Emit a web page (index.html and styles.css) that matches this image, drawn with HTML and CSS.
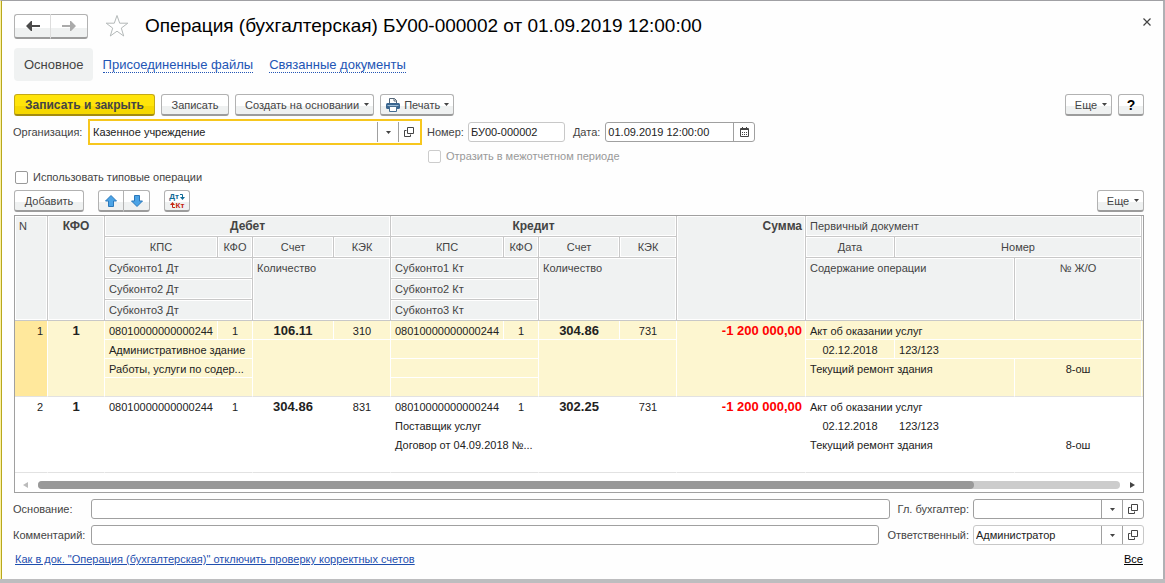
FILE: index.html
```html
<!DOCTYPE html>
<html lang="ru">
<head>
<meta charset="utf-8">
<title>Операция (бухгалтерская)</title>
<link rel="stylesheet" href="styles.css">
</head>
<body>
<svg class="defs" aria-hidden="true">
  <symbol id="open" viewBox="0 0 10 10"><path d="M3.500.5h6v6h-6zM2.500 3.500h-2v6h6v-2" fill="none" stroke="#444"/></symbol>
  <symbol id="caret" viewBox="0 0 5 3"><path d="M0 0h5L2.500 3z" fill="#444"/></symbol>
</svg>
<main class="window">
  <header class="title-bar">
    <div class="btn-pair history">
      <button class="btn" aria-label="Назад"><svg width="14" height="10" viewBox="0 0 14 10"><path d="M0 5l5-5h1v4h8v2H6v4H5z" fill="#4a4a4a"/></svg></button>
      <button class="btn" aria-label="Вперед"><svg width="14" height="10" viewBox="0 0 14 10"><path d="M14 5L9 0H8v4H0v2h8v4h1z" fill="#aaa"/></svg></button>
    </div>
    <svg class="star" width="24" height="24" viewBox="0 0 24 24"><path d="M12 1.500l2.700 7.700h8.100l-6.500 4.900 2.400 7.900-6.700-4.800-6.700 4.800 2.400-7.900-6.500-4.900h8.100z" fill="#fff" stroke="#b4b9b9"/></svg>
    <h1>Операция (бухгалтерская) БУ00-000002 от 01.09.2019 12:00:00</h1>
    <button class="close" aria-label="Закрыть"><svg width="8" height="8" viewBox="0 0 8 8"><path d="M.5.5l7 7M7.500.5l-7 7" stroke="#444" stroke-width="1.200"/></svg></button>
  </header>

  <nav class="tabs">
    <span class="tab-current">Основное</span>
    <a href="#">Присоединенные файлы</a>
    <a href="#">Связанные документы</a>
  </nav>

  <div class="toolbar">
    <button class="btn primary">Записать и закрыть</button>
    <button class="btn save">Записать</button>
    <button class="btn menu create">Создать на основании <svg class="caret"><use href="#caret"/></svg></button>
    <button class="btn menu print"><svg width="14" height="14" viewBox="0 0 14 14"><path d="M3.500 6V.5h5l2 2V6" fill="#fff" stroke="#567"/><path d="M8 .5v2.500h2.500" fill="none" stroke="#567"/><rect y="5" width="14" height="6" rx="1.500" fill="#3a6690"/><path d="M1.500 7.500h11" stroke="#9cbcd6"/><path d="M3.500 8.500h7v5h-7z" fill="#fff" stroke="#456d91"/></svg>Печать <svg class="caret"><use href="#caret"/></svg></button>
    <span class="spacer"></span>
    <button class="btn menu more">Еще <svg class="caret"><use href="#caret"/></svg></button>
    <button class="btn help">?</button>
  </div>

  <div class="fields">
    <label class="caption" for="org">Организация:</label>
    <div class="combo focused"><input id="org" value="Казенное учреждение" autofocus><button aria-label="Выбрать"><svg class="caret"><use href="#caret"/></svg></button><button aria-label="Открыть"><svg class="open"><use href="#open"/></svg></button></div>
    <label for="num">Номер:</label>
    <input class="number" id="num" value="БУ00-000002">
    <label for="date">Дата:</label>
    <div class="combo date"><input id="date" value="01.09.2019 12:00:00"><button aria-label="Календарь"><svg width="9" height="10" viewBox="0 0 9 10"><path d="M.5 1.500h8v8h-8z" fill="#fff" stroke="#444"/><path d="M0 2.500h9M2.500 0v2M6.500 0v2" stroke="#444"/><path d="M2 5.500h5M2 7.500h5" stroke="#444" stroke-dasharray="1 1"/></svg></button></div>
  </div>
  <label class="check inter"><input type="checkbox" disabled>Отразить в межотчетном периоде</label>
  <label class="check"><input type="checkbox">Использовать типовые операции</label>

  <div class="toolbar table-tools">
    <button class="btn add">Добавить</button>
    <div class="btn-pair moves">
      <button class="btn" aria-label="Вверх"><svg width="12" height="12" viewBox="0 0 12 12"><path d="M6 .5l5.500 5.500H8.500v5.500h-5V6H.5z" fill="#4ba3e6" stroke="#2b78ba"/></svg></button>
      <button class="btn" aria-label="Вниз"><svg width="12" height="12" viewBox="0 0 12 12"><path d="M6 11.500L.5 6h3V.5h5V6h3z" fill="#4ba3e6" stroke="#2b78ba"/></svg></button>
    </div>
    <button class="btn dtkt" aria-label="Дебет и кредит"><span class="dt">Дт<svg width="5" height="7" viewBox="0 0 5 7"><path d="M0 1.500h2.500V5" fill="none" stroke="#0f6a96"/><path d="M0 4h5L2.500 7z" fill="#0f6a96"/></svg></span><span class="kt"><svg width="5" height="7" viewBox="0 0 5 7"><path d="M5 5.500H2.500V2" fill="none" stroke="#c42410"/><path d="M0 3h5L2.500 0z" fill="#c42410"/></svg>Кт</span></button>
    <span class="spacer"></span>
    <button class="btn menu more">Еще <svg class="caret"><use href="#caret"/></svg></button>
  </div>

  <section class="grid">
    <table>
      <colgroup><col class="w-n"><col class="w-kfo"><col class="w-kps"><col class="w-k"><col class="w-acc"><col class="w-kek"><col class="w-kps"><col class="w-k"><col class="w-acc"><col class="w-kek"><col class="w-sum"><col class="w-date"><col><col class="w-jo"><col class="w-end"></colgroup>
      <thead>
        <tr><th rowspan="5">N</th><th rowspan="5" class="b c">КФО</th><th colspan="4" class="b c">Дебет</th><th colspan="4" class="b c">Кредит</th><th rowspan="5" class="b r">Сумма</th><th colspan="3">Первичный документ</th><th rowspan="5" class="end"></th></tr>
        <tr><th class="c">КПС</th><th class="c">КФО</th><th class="c">Счет</th><th class="c">КЭК</th><th class="c">КПС</th><th class="c">КФО</th><th class="c">Счет</th><th class="c">КЭК</th><th class="c">Дата</th><th colspan="2" class="c">Номер</th></tr>
        <tr><th colspan="2">Субконто1 Дт</th><th colspan="2" rowspan="3">Количество</th><th colspan="2">Субконто1 Кт</th><th colspan="2" rowspan="3">Количество</th><th colspan="2" rowspan="3">Содержание операции</th><th rowspan="3" class="c">№ Ж/О</th></tr>
        <tr><th colspan="2">Субконто2 Дт</th><th colspan="2">Субконто2 Кт</th></tr>
        <tr><th colspan="2">Субконто3 Дт</th><th colspan="2">Субконто3 Кт</th></tr>
      </thead>
      <tbody class="selected">
        <tr><td rowspan="4" class="r num">1</td><td rowspan="4" class="b c">1</td><td class="c">08010000000000244</td><td class="c">1</td><td class="b c">106.11</td><td class="c">310</td><td class="c">08010000000000244</td><td class="c">1</td><td class="b c">304.86</td><td class="c">731</td><td rowspan="4" class="b r neg">-1 200 000,00</td><td colspan="3">Акт об оказании услуг</td><td rowspan="4" class="end"></td></tr>
        <tr><td colspan="2">Административное здание</td><td colspan="2" rowspan="3"></td><td colspan="2"></td><td colspan="2" rowspan="3"></td><td class="c">02.12.2018</td><td colspan="2">123/123</td></tr>
        <tr><td colspan="2">Работы, услуги по содер...</td><td colspan="2"></td><td colspan="2" rowspan="2">Текущий ремонт здания</td><td rowspan="2" class="c">8-ош</td></tr>
        <tr><td colspan="2"></td><td colspan="2"></td></tr>
      </tbody>
      <tbody>
        <tr><td rowspan="4" class="r num">2</td><td rowspan="4" class="b c">1</td><td class="c">08010000000000244</td><td class="c">1</td><td class="b c">304.86</td><td class="c">831</td><td class="c">08010000000000244</td><td class="c">1</td><td class="b c">302.25</td><td class="c">731</td><td rowspan="4" class="b r neg">-1 200 000,00</td><td colspan="3">Акт об оказании услуг</td><td rowspan="4" class="end"></td></tr>
        <tr><td colspan="2"></td><td colspan="2" rowspan="3"></td><td colspan="2">Поставщик услуг</td><td colspan="2" rowspan="3"></td><td class="c">02.12.2018</td><td colspan="2">123/123</td></tr>
        <tr><td colspan="2"></td><td colspan="2">Договор от 04.09.2018 №...</td><td colspan="2" rowspan="2">Текущий ремонт здания</td><td rowspan="2" class="c">8-ош</td></tr>
        <tr><td colspan="2"></td><td colspan="2"></td></tr>
      </tbody>
    </table>
    <div class="scroll">
      <svg width="5" height="6" viewBox="0 0 5 6"><path d="M5 0v6L0 3z" fill="#bbb"/></svg>
      <div class="track"><div class="thumb"></div></div>
      <svg width="5" height="6" viewBox="0 0 5 6"><path d="M0 0v6l5-3z" fill="#444"/></svg>
    </div>
  </section>

  <div class="foot-row">
    <label class="caption" for="base">Основание:</label>
    <input class="wide" id="base">
    <label for="chief">Гл. бухгалтер:</label>
    <div class="combo person"><input id="chief"><button aria-label="Выбрать"><svg class="caret"><use href="#caret"/></svg></button><button aria-label="Открыть"><svg class="open"><use href="#open"/></svg></button></div>
  </div>
  <div class="foot-row">
    <label class="caption" for="comment">Комментарий:</label>
    <input class="wide" id="comment">
    <label for="resp">Ответственный:</label>
    <div class="combo person light"><input id="resp" value="Администратор"><button aria-label="Выбрать"><svg class="caret"><use href="#caret"/></svg></button><button aria-label="Открыть"><svg class="open"><use href="#open"/></svg></button></div>
  </div>
  <footer class="links"><a href="#">Как в док. "Операция (бухгалтерская)" отключить проверку корректных счетов</a><a class="all" href="#">Все</a></footer>
</main>
</body>
</html>
```
FILE: styles.css
```css
* { box-sizing: border-box; }
body {
  margin: 0;
  min-height: 100vh;
  display: flex;
  padding-bottom: 4px;
  background: #bdbdbf;
  font: 11px/14px "Liberation Sans", Arial, sans-serif;
  color: #444;
}
input, button { font: inherit; color: inherit; margin: 0; }
button { cursor: pointer; }
svg { flex: none; display: block; }
.defs { position: absolute; width: 0; height: 0; }
.caret { width: 5px; height: 3px; }
.open { width: 10px; height: 10px; }
.spacer { flex: 1; }

.window {
  flex: 1;
  min-width: 0;
  display: flex;
  flex-direction: column;
  padding: 12px 19px 0 13px;
  background: #fefefe;
  border-top: 1px solid #a0a0a4;
  border-right: 2px solid #b0b0b4;
  border-left: 1px solid #fbf0a0;
  box-shadow: inset 1px 0 #b8a81c;
}

.btn {
  display: flex;
  align-items: center;
  justify-content: center;
  height: 22px;
  padding: 0 9px;
  white-space: nowrap;
  background: linear-gradient(#fff 60%, #eff1f1 60%);
  border: 1px solid #b2b2b2;
  border-bottom: 2px solid #9c9c9c;
  border-radius: 3px;
}
.btn-pair { display: flex; }
.btn-pair .btn:first-child { border-radius: 3px 0 0 3px; }
.btn-pair .btn:last-child { border-radius: 0 3px 3px 0; border-left: 0; }
.history .btn { width: 37px; height: 25px; }
.history .btn:first-child { border-right-color: #ddd; }
.menu { gap: 5px; padding: 0 4px 0 9px; }

.title-bar { display: flex; align-items: center; height: 26px; }
.star { margin: 0 16px 0 17px; }
h1 { margin: 0; flex: 1; font-size: 19px; font-weight: 400; line-height: 24px; color: #000; }
.close { display: flex; padding: 4px; margin: 0 -11px 8px 0; border: 0; background: none; }

.tabs { display: flex; align-items: center; gap: 16px; margin-top: 9px; font-size: 13px; line-height: 16px; }
.tab-current { padding: 9px 9px 8px 10px; margin-right: -6px; background: #f0f2f2; border-radius: 4px; }
.tabs a { color: #2255b5; text-decoration: none; border-bottom: 1px dotted #2255b5; line-height: 15px; }

.toolbar { display: flex; gap: 6px; margin-top: 13px; }
.primary {
  min-width: 141px;
  font-size: 12px;
  font-weight: 700;
  background: linear-gradient(#ffe40a 60%, #f6d800 60%);
  border-color: #c4a916;
  border-bottom-color: #a38c10;
}
.save { min-width: 68px; }
.create { min-width: 139px; }
.print { min-width: 74px; padding-left: 5px; gap: 4px; }
.more { width: 47px; }
.help { width: 26px; font-size: 14px; font-weight: 700; color: #000; }

.fields { display: flex; align-items: center; gap: 5px; margin-top: 3px; }
.caption { width: 71px; margin-left: -1px; }
.combo, .number, .wide { height: 20px; border: 1px solid #a0a0a0; border-radius: 3px; background: #fff; color: #222; }
.number, .wide { padding: 0 2px; }
.combo { display: flex; }
.combo input { flex: 1; min-width: 0; padding: 0 2px; border: 0; background: none; outline: 0; }
.combo button { display: flex; align-items: center; justify-content: center; width: 21px; padding: 0; border: 0; border-left: 1px solid #a0a0a0; background: none; }
.focused { width: 334px; height: 26px; margin-left: -1px; padding: 1px; border: 2px solid #f7c71e; border-radius: 0; }
.number { width: 97px; border-color: #c8c8c8; margin: 0 3px 0 -1px; }
.date { width: 150px; }
.light { border-color: #c8c8c8; }

.check { display: flex; align-items: center; align-self: flex-start; gap: 5px; height: 14px; margin-top: 7px; }
.check input { appearance: none; width: 13px; height: 13px; margin: 0 0 0 1px; background: #fff; border: 1px solid #999; border-radius: 2px; }
.inter { margin: 4px 0 0 413px; color: #999; }
.inter input { border-color: #ccc; }

.table-tools { margin-top: 6px; }
.add { width: 70px; margin-right: 8px; }
.moves { margin-right: 8px; }
.moves .btn { width: 26px; padding: 0; }
.dtkt { width: 26px; padding: 0; flex-direction: column; font-size: 8px; line-height: 9px; font-weight: 700; }
.dt, .kt { display: flex; align-items: center; gap: 1px; }
.dt { color: #0f6a96; }
.kt { color: #c42410; }

.grid { margin-top: 3px; border: 1px solid #a0a0a0; background: #fff; }
table { width: 100%; table-layout: fixed; border-collapse: separate; border-spacing: 0; }
.w-n { width: 33px; } .w-kfo { width: 57px; } .w-kps { width: 113px; } .w-k { width: 35px; }
.w-acc { width: 81px; } .w-kek { width: 57px; } .w-sum { width: 129px; } .w-date { width: 89px; }
.w-jo { width: 127px; } .w-end { width: 1px; }
th, td { text-align: left; vertical-align: top; font-weight: 400; line-height: 14px; white-space: nowrap; overflow: hidden; }
th { height: 21px; padding: 3px 3px 3px 4px; background: #f0f2f2; border: 0 solid #c8c8c8; border-width: 0 1px 1px 0; box-shadow: inset 0 0 0 1px #fff; }
td { height: 19px; padding: 3px 4px 1px; color: #222; border: 0 solid #fff; border-width: 0 1px 1px 0; }
.c { text-align: center; padding-left: 0; padding-right: 0; }
.r { text-align: right; }
.b { font-weight: 700; }
th.b { font-size: 12px; }
td.b { font-size: 13px; }
td.neg { color: #f00; padding-right: 3px; }
.end { padding: 0; border-right: 0; }
.selected td { background: #fdf6d0; }
.selected .num { background: #ffe89c; }
tbody td[rowspan="4"], tbody tr:last-child td, tbody td[rowspan="3"], tbody td[rowspan="2"] { border-bottom-color: #e2e2e2; }

.scroll { display: flex; align-items: center; gap: 10px; height: 19px; padding: 5px 8px 0; }
.track { flex: 1; height: 8px; border-radius: 4px; background: #ccc; }
.thumb { width: 86.5%; height: 8px; border-radius: 4px; background: #999; }

.foot-row { display: flex; align-items: center; gap: 4px; margin-top: 6px; }
.foot-row .caption { width: 74px; }
.wide { flex: 1; min-width: 0; margin-right: 4px; }
.person { width: 171px; }
.links { display: flex; justify-content: space-between; margin: 7px 1px 0; }
.links a { color: #1f4fae; }
.links .all { color: #000; }
```
